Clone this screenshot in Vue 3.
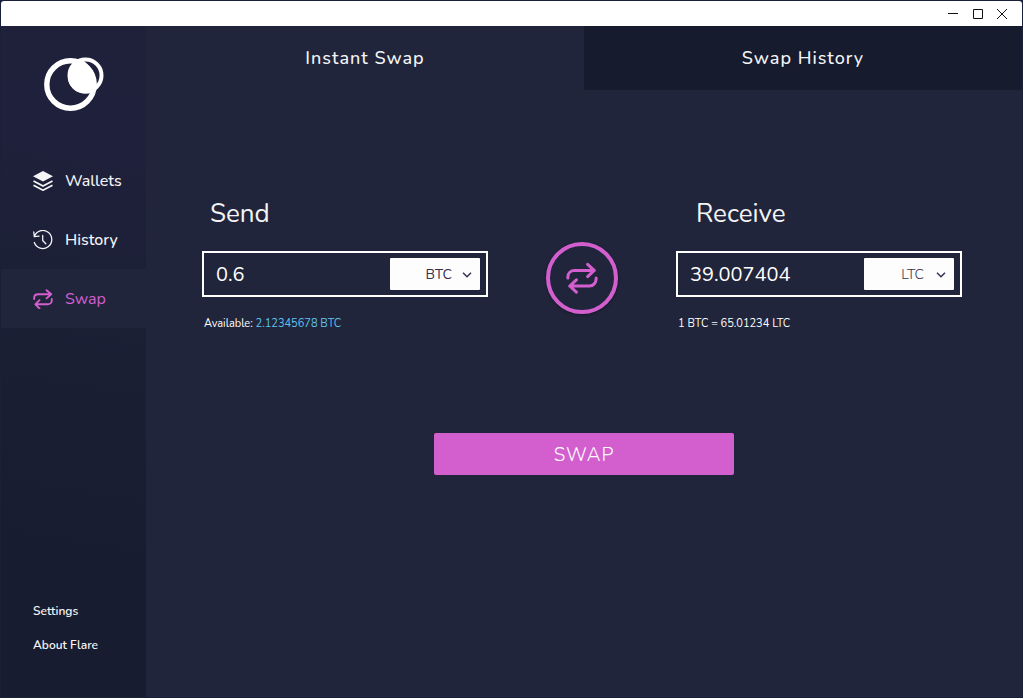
<script setup>
import { ref } from 'vue'

const tab = ref('swap')
const send = ref('0.6')
const receive = ref('39.007404')
const sendCoin = ref('BTC')
const receiveCoin = ref('LTC')
const coins = ['BTC', 'LTC']
</script>

<template>
  <div class="window">
    <header class="titlebar">
      <button type="button" aria-label="Minimize">
        <svg width="12" height="12" viewBox="0 0 12 12"><path d="M0 5.5H10" /></svg>
      </button>
      <button type="button" aria-label="Maximize">
        <svg width="12" height="12" viewBox="0 0 12 12"><path d="M1.5 1.5H10.5V10.5H1.5Z" /></svg>
      </button>
      <button type="button" aria-label="Close">
        <svg width="12" height="12" viewBox="0 0 12 12"><path d="M1 1L11 11M11 1L1 11" /></svg>
      </button>
    </header>

    <div class="body">
      <aside class="sidebar">
        <svg class="logo" width="62" height="56" viewBox="0 0 62 56" aria-hidden="true">
          <circle cx="28.5" cy="27.500" r="23.7" fill="none" stroke="#fff" stroke-width="5.4" />
          <circle cx="43.5" cy="18.500" r="16" fill="none" stroke="#fff" stroke-width="4" />
          <path d="M34 4C28 8 26 14 26 20C26 30 34 36.500 44 36.500C48 36.500 51 35.500 53 33C57 22 50 9 40 3Z" fill="#fff" />
        </svg>

        <nav class="menu" aria-label="Main">
          <a href="#wallets">
            <svg width="20" height="20" viewBox="0 0 20 20">
              <path d="M10 0L20 5.300L10 10.600L0 5.300Z" fill="currentColor" />
              <path d="M.5 10L10 15L19.500 10M.5 14.200L10 19.200L19.500 14.200" fill="none" stroke="currentColor" stroke-width="1.700" />
            </svg>
            Wallets
          </a>
          <a href="#history">
            <svg width="20" height="20" viewBox="0 0 20 20" fill="none" stroke="currentColor" stroke-width="1.300" stroke-linecap="round" stroke-linejoin="round">
              <path d="M1.300 6.500A9 9 0 1 1 1.300 12.500M.8 2L1.300 6.700L6 6.200M9.700 5.500V10.500L12.800 13.800" />
            </svg>
            History
          </a>
          <a href="#swap" class="active" aria-current="page">
            <svg width="20" height="20" viewBox="0 0 34 34" fill="none" stroke="currentColor" stroke-width="3.200" stroke-linecap="round" stroke-linejoin="round">
              <path d="M2 17V15C2 11 5 9 9 9H31M23 2L31 9L23 16M32 17V19C32 23 29 26 25 26H4M11 19L4 26L11 33" />
            </svg>
            Swap
          </a>
        </nav>

        <nav class="links" aria-label="More">
          <a href="#settings">Settings</a>
          <a href="#about">About Flare</a>
        </nav>
      </aside>

      <main class="main">
        <div class="tabs" role="tablist">
          <button type="button" role="tab" :aria-selected="tab === 'swap'" @click="tab = 'swap'">Instant Swap</button>
          <button type="button" role="tab" :aria-selected="tab === 'history'" @click="tab = 'history'">Swap History</button>
        </div>

        <form class="exchange" @submit.prevent>
          <div class="pair">
            <section>
              <label class="heading" for="send">Send</label>
              <div class="field">
                <input id="send" v-model="send" type="text" inputmode="decimal" />
                <div class="coin">
                  <select v-model="sendCoin" aria-label="Currency to send">
                    <option v-for="c in coins" :key="c">{{ c }}</option>
                  </select>
                  <svg width="10" height="6" viewBox="0 0 10 6"><path d="M1 .8L5 4.800L9 .8" /></svg>
                </div>
              </div>
              <p class="note">Available: <span>2.12345678 BTC</span></p>
            </section>

            <button type="button" class="flip" aria-label="Switch currencies">
              <svg width="32" height="32" viewBox="0 0 34 34" fill="none" stroke="currentColor" stroke-width="3.200" stroke-linecap="round" stroke-linejoin="round">
                <path d="M2 17V16C2 12 5 9 9 9H30M23 2.500L30 9L23 15.500M32 17V18C32 22 29 25.500 25 25.500H4M11 19L4 25.500L11 32" />
              </svg>
            </button>

            <section>
              <label class="heading indented" for="receive">Receive</label>
              <div class="field">
                <input id="receive" v-model="receive" type="text" inputmode="decimal" />
                <div class="coin light">
                  <select v-model="receiveCoin" aria-label="Currency to receive">
                    <option v-for="c in coins" :key="c">{{ c }}</option>
                  </select>
                  <svg width="10" height="6" viewBox="0 0 10 6"><path d="M1 .8L5 4.800L9 .8" /></svg>
                </div>
              </div>
              <p class="note">1 BTC = 65.01234 LTC</p>
            </section>
          </div>

          <button type="submit" class="submit">SWAP</button>
        </form>
      </main>
    </div>
  </div>
</template>

<style>
body {
  background: #1a2038;
}
</style>

<style scoped>
.window,
.window * {
  box-sizing: border-box;
}
.window {
  display: flex;
  flex-direction: column;
  min-height: 100vh;
  padding: 1px;
  background: #1a2038;
  color: #f4f4f6;
  font-family: Nunito, Lato, "Open Sans", sans-serif;
  font-size: 16px;
}
button,
input,
select {
  margin: 0;
  border: 0;
  border-radius: 0;
  padding: 0;
  background: none;
  color: inherit;
  font: inherit;
}
a {
  color: inherit;
  text-decoration: none;
}
.titlebar {
  display: flex;
  justify-content: flex-end;
  align-items: center;
  height: 25px;
  padding-right: 8px;
  border-radius: 3px 3px 0 0;
  background: #fff;
}
.titlebar button {
  display: grid;
  place-items: center;
  width: 24px;
  height: 25px;
}
.titlebar path {
  fill: none;
  stroke: #111;
}
.body {
  flex: 1;
  display: flex;
}
.sidebar {
  flex: none;
  display: flex;
  flex-direction: column;
  width: 145px;
  background: linear-gradient(190deg, #1f213b 0%, #1f203b 20%, #1b2036 40%, #171c30 80%);
}
.logo {
  margin: 31px 0 0 41px;
}
.menu {
  margin-top: 38px;
}
.menu a {
  display: flex;
  align-items: center;
  gap: 12px;
  height: 59px;
  padding-left: 32px;
  font-weight: 500;
}
.menu .active {
  background: #20253b;
  color: #d35fcf;
  font-weight: 400;
}
.links {
  display: flex;
  flex-direction: column;
  gap: 18px;
  margin-top: auto;
  padding: 0 32px 44px;
  font-size: 12px;
  line-height: 16px;
  font-weight: 600;
}
.main {
  flex: 1;
  min-width: 0;
  background: #20253b;
}
.tabs {
  display: grid;
  grid-template-columns: 1fr 1fr;
}
.tabs button {
  height: 64px;
  background: #161b2e;
  font-size: 18px;
  font-weight: 500;
  letter-spacing: 1px;
}
.tabs button[aria-selected="true"] {
  background: #20253b;
}
.exchange {
  padding-top: 106px;
}
.pair {
  display: grid;
  grid-template-columns: minmax(0, 1fr) 72px minmax(0, 1fr);
  column-gap: 58px;
  padding: 0 60px 0 56px;
}
.heading {
  display: block;
  padding-left: 8px;
  font-size: 26px;
  line-height: 36px;
}
.heading.indented {
  padding-left: 20px;
}
.field {
  display: flex;
  align-items: center;
  height: 46px;
  margin-top: 19px;
  padding: 0 6px 0 12px;
  border: 2px solid #fff;
}
.field input {
  flex: 1;
  min-width: 0;
  color: #fff;
  font-size: 20px;
}
.coin {
  position: relative;
  width: 90px;
  height: 32px;
  border-radius: 1px;
  background: #fdfdfe;
  color: #34304f;
}
.coin select {
  width: 100%;
  height: 100%;
  padding-right: 28px;
  appearance: none;
  font-size: 14px;
  text-align-last: right;
}
.coin.light select {
  padding-right: 30px;
  font-weight: 300;
}
.coin svg {
  position: absolute;
  top: 14px;
  right: 8px;
  pointer-events: none;
}
.coin path {
  fill: none;
  stroke: currentColor;
  stroke-width: 1.500;
}
.note {
  margin: 19px 0 0;
  padding-left: 2px;
  color: #fff;
  font-size: 11px;
  line-height: 16px;
}
.note span {
  color: #5fc3ee;
}
.flip {
  display: grid;
  place-items: center;
  width: 72px;
  height: 72px;
  margin-top: 46px;
  border: 4px solid #d35fcf;
  border-radius: 50%;
  color: #d35fcf;
  box-shadow: 0 1px 3px rgba(0, 0, 0, 0.4);
}
.submit {
  display: block;
  width: 300px;
  height: 42px;
  margin: 101px auto 0;
  padding-top: 1px;
  border-radius: 2px;
  background: #d35fcf;
  color: #fff;
  font-size: 19px;
  font-weight: 300;
  letter-spacing: 1px;
}
</style>
